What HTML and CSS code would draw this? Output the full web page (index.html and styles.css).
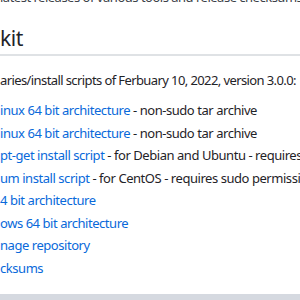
FILE: index.html
```html
<!DOCTYPE html>
<html lang="en">
<head>
  <meta charset="UTF-8">
  <meta name="viewport" content="width=device-width, initial-scale=1.0">
  <title>Toolkit releases</title>
  <link rel="stylesheet" href="styles.css">
</head>
<body>

  <div class="markdown">
    <p class="intro">latest releases of various tools and release checksums</p>

    <h2 class="titulo">kit</h2>

    <p class="resumo">aries/install scripts of Ferbuary 10, 2022, version 3.0.0:</p>

    <ul class="downloads">
      <li><a href="#">inux 64 bit architecture</a> - non-sudo tar archive</li>
      <li><a href="#">inux 64 bit architecture</a> - non-sudo tar archive</li>
      <li><a href="#">pt-get install script</a> - for Debian and Ubuntu - requires sudo permissions</li>
      <li><a href="#">um install script</a> - for CentOS - requires sudo permissions</li>
      <li><a href="#">4 bit architecture</a></li>
      <li><a href="#">ows 64 bit architecture</a></li>
      <li><a href="#">nage repository</a></li>
      <li><a href="#">cksums</a></li>
    </ul>
  </div>

  <div class="barra"></div>

</body>
</html>
```

FILE: styles.css
```css
html, body {
  height: 100%;
}

body {
  font-family: "Noto Sans", "Open Sans", sans-serif;
  font-size: 13px;
  letter-spacing: -0.5px;
  line-height: 22.5px;
  color: #1f2328;
  background-color: #fff;
  margin: 0;
  overflow: hidden;
  display: flex;
  flex-direction: column;
}

.markdown {
  flex: 1;
  white-space: nowrap;
  overflow: hidden;
}

.intro {
  margin: -14px 0 0 0;
  color: #3b4148;
}

.titulo {
  font-size: 21px;
  font-weight: 400;
  letter-spacing: -0.5px;
  line-height: 28px;
  margin: 15px 0 0 0;
  padding-bottom: 2px;
  border-bottom: 2px solid #dfe2e5;
}

.resumo {
  margin: 13px 0 0 0;
  letter-spacing: -0.6px;
}

.downloads {
  list-style: none;
  margin: 8px 0 0 0;
  padding: 0;
}

.downloads li {
  letter-spacing: -0.45px;
}

.downloads a {
  color: #0969da;
  text-decoration: none;
}

.barra {
  height: 6px;
  background-color: #d5d9e0;
}
```
